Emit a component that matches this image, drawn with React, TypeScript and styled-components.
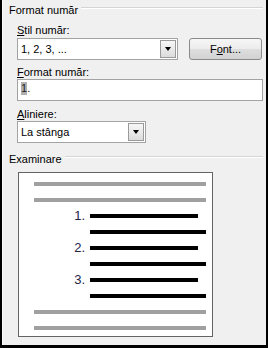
import React from "react";
import styled, { createGlobalStyle } from "styled-components";

const GlobalStyle = createGlobalStyle`
  html, body { margin: 0; padding: 0; background: #000; }
  body { font-family: "Liberation Sans", Arial, sans-serif; }
`;

const Dialog = styled.div`
  width: 268px;
  height: 348px;
  box-sizing: border-box;
  background: #f0f0f0;
  border-left: 2px solid #000;
  border-right: 2px solid #000;
  border-bottom: 3px solid #000;
  box-shadow: inset 1px 0 0 #fbfbfb;
  padding: 4px 3px 0 7px;
  display: flex;
  flex-direction: column;
  font-size: 11px;
  line-height: 13px;
  color: #000;
`;

const GroupHeader = styled.div<{ $top?: number }>`
  display: flex;
  align-items: flex-start;
  gap: 3px;
  margin-top: ${(p) => p.$top ?? 0}px;
  height: 13px;
`;

const HeaderText = styled.span`
  white-space: nowrap;
`;

const HeaderRule = styled.div`
  flex: 1;
  margin-top: 3px;
  border-top: 1px solid #d5d5d5;
  border-bottom: 1px solid #ffffff;
`;

const GroupBody = styled.div`
  display: flex;
  flex-direction: column;
  padding-left: 8px;
  margin-top: 7px;
`;

const FieldLabel = styled.div<{ $top?: number }>`
  height: 13px;
  margin-top: ${(p) => p.$top ?? 0}px;
  white-space: nowrap;
`;

const ComboRow = styled.div`
  display: flex;
  justify-content: space-between;
  align-items: flex-start;
  margin-top: 1px;
`;

const Combo = styled.div<{ $w: number }>`
  width: ${(p) => p.$w}px;
  height: 22px;
  box-sizing: border-box;
  border: 1px solid #a3a3a3;
  background: #fff;
  padding: 1px;
  display: flex;
  align-items: stretch;
`;

const ComboValue = styled.div`
  flex: 1;
  display: flex;
  align-items: center;
  padding-left: 2px;
  font-size: 11px;
`;

const DropButton = styled.div`
  width: 16px;
  box-sizing: border-box;
  border: 1px solid #9a9a9a;
  background: linear-gradient(#f7f7f7, #dcdcdc);
  display: flex;
  align-items: center;
  justify-content: center;
`;

const Arrow = styled.span`
  width: 0;
  height: 0;
  border-left: 3.5px solid transparent;
  border-right: 3.5px solid transparent;
  border-top: 4px solid #000;
`;

const FontButton = styled.div`
  width: 73px;
  height: 22px;
  margin-right: 1px;
  box-sizing: border-box;
  border: 1px solid #8a8a8a;
  border-radius: 3px;
  background: linear-gradient(#f6f6f6 0%, #ececec 50%, #dedede 51%, #d2d2d2 100%);
  display: flex;
  align-items: center;
  justify-content: center;
`;

const TextInput = styled.div`
  height: 22px;
  box-sizing: border-box;
  border: 1px solid #a3a3a3;
  background: #fff;
  padding: 2px 0 0 3px;
  display: flex;
  align-items: flex-start;
`;

const Selected = styled.span`
  display: inline-block;
  background: #b0b0b0;
  color: #222;
  height: 13px;
  line-height: 13px;
`;

const Plain = styled.span`
  display: inline-block;
  height: 13px;
  line-height: 13px;
`;

const PreviewBox = styled.div`
  width: 195px;
  height: 165px;
  box-sizing: border-box;
  margin: 6px 0 0 9px;
  border: 1px solid #646464;
  background: #fff;
  padding-top: 3px;
  display: flex;
  flex-direction: column;
`;

const PreviewRow = styled.div<{ $indent: number }>`
  display: flex;
  align-items: center;
  height: 16px;
  padding-left: ${(p) => p.$indent}px;
`;

const NumCell = styled.div`
  width: 71px;
  box-sizing: border-box;
  padding-right: 5px;
  text-align: right;
  font-size: 13px;
  line-height: 16px;
  color: #23234a;
`;

const Bar = styled.div<{ $w: number; $tone: "gray" | "black" }>`
  width: ${(p) => p.$w}px;
  height: 4px;
  background: ${(p) => (p.$tone === "gray" ? "#a0a0a0" : "#000")};
`;

type Line =
  | { kind: "gray" }
  | { kind: "full" }
  | { kind: "num"; n: string };

const lines: Line[] = [
  { kind: "gray" },
  { kind: "gray" },
  { kind: "num", n: "1." },
  { kind: "full" },
  { kind: "num", n: "2." },
  { kind: "full" },
  { kind: "num", n: "3." },
  { kind: "full" },
  { kind: "gray" },
  { kind: "gray" },
];

export default function App() {
  return (
    <>
      <GlobalStyle />
      <Dialog>
        <GroupHeader>
          <HeaderText>Format număr</HeaderText>
          <HeaderRule />
        </GroupHeader>
        <GroupBody>
          <FieldLabel>
            <u>S</u>til număr:
          </FieldLabel>
          <ComboRow>
            <Combo $w={161}>
              <ComboValue>1, 2, 3, ...</ComboValue>
              <DropButton>
                <Arrow />
              </DropButton>
            </Combo>
            <FontButton>
              F<u>o</u>nt...
            </FontButton>
          </ComboRow>
          <FieldLabel $top={6}>
            <u>F</u>ormat număr:
          </FieldLabel>
          <TextInput>
            <Selected>1</Selected>
            <Plain>.</Plain>
          </TextInput>
          <FieldLabel $top={7}>
            <u>A</u>liniere:
          </FieldLabel>
          <Combo $w={129}>
            <ComboValue>La stânga</ComboValue>
            <DropButton>
              <Arrow />
            </DropButton>
          </Combo>
        </GroupBody>
        <GroupHeader $top={10}>
          <HeaderText>Examinare</HeaderText>
          <HeaderRule />
        </GroupHeader>
        <PreviewBox>
          {lines.map((l, i) =>
            l.kind === "gray" ? (
              <PreviewRow key={i} $indent={15}>
                <Bar $w={172} $tone="gray" />
              </PreviewRow>
            ) : l.kind === "full" ? (
              <PreviewRow key={i} $indent={71}>
                <Bar $w={116} $tone="black" />
              </PreviewRow>
            ) : (
              <PreviewRow key={i} $indent={0}>
                <NumCell>{l.n}</NumCell>
                <Bar $w={108} $tone="black" />
              </PreviewRow>
            )
          )}
        </PreviewBox>
      </Dialog>
    </>
  );
}
